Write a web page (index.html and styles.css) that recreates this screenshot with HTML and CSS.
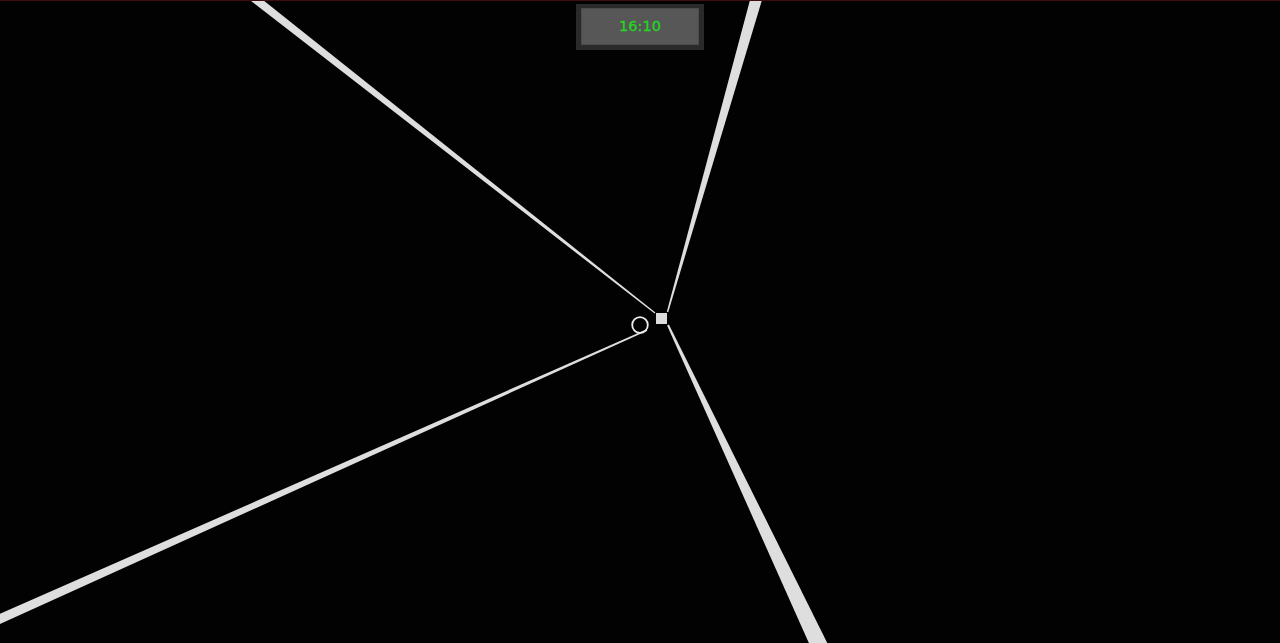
FILE: index.html
```html
<!DOCTYPE html>
<html lang="en">
<head>
<meta charset="utf-8">
<title>Clock</title>
<link rel="stylesheet" href="styles.css">
</head>
<body>
<main class="stage">
  <svg class="scene" viewBox="0 1 1280 642" width="1280" height="642" xmlns="http://www.w3.org/2000/svg">
    <polygon class="ray" points="655.4,312.4 246.3,-13.3 241.1,-6.7 654.6,313.6"/>
    <polygon class="ray" points="668.2,312.2 764.5,-8.4 753.1,-11.6 666.8,311.8"/>
    <polygon class="ray" points="668.9,324.6 830.4,649.3 815.0,656.7 667.1,325.4"/>
    <polygon class="ray" points="647.3,330.7 -8.06,627.7 -11.94,619.1 646.7,329.3"/>
    <rect class="node" x="656" y="313" width="11" height="11"/>
    <circle class="ring" cx="640" cy="325" r="7.8"/>
  </svg>
  <div class="clock">
    <div class="clock-face">16:10</div>
  </div>
</main>
</body>
</html>
```

FILE: styles.css
```css
html, body {
  margin: 0;
  padding: 0;
  background: #020202;
}

.stage {
  display: grid;
  width: 1280px;
  height: 642px;
  border-top: 1px solid #3e0d0d;
  background: #020202;
  overflow: hidden;
}

.scene {
  grid-area: 1 / 1;
  display: block;
}

.ray {
  fill: #dedede;
}

.node {
  fill: #dcdcdc;
}

.ring {
  fill: none;
  stroke: #ececec;
  stroke-width: 1.8;
}

.clock {
  grid-area: 1 / 1;
  justify-self: center;
  align-self: start;
  margin-top: 3px;
  width: 118px;
  padding: 4px 5px 5px 5px;
  background: #2a2a2a;
}

.clock-face {
  height: 35px;
  border: 1px solid #4c4c4c;
  background: #575757;
  color: #22d822;
  font-family: "DejaVu Sans", sans-serif;
  font-size: 14.5px;
  line-height: 35px;
  text-align: center;
  -webkit-text-stroke: 0.3px #22d822;
}
```
